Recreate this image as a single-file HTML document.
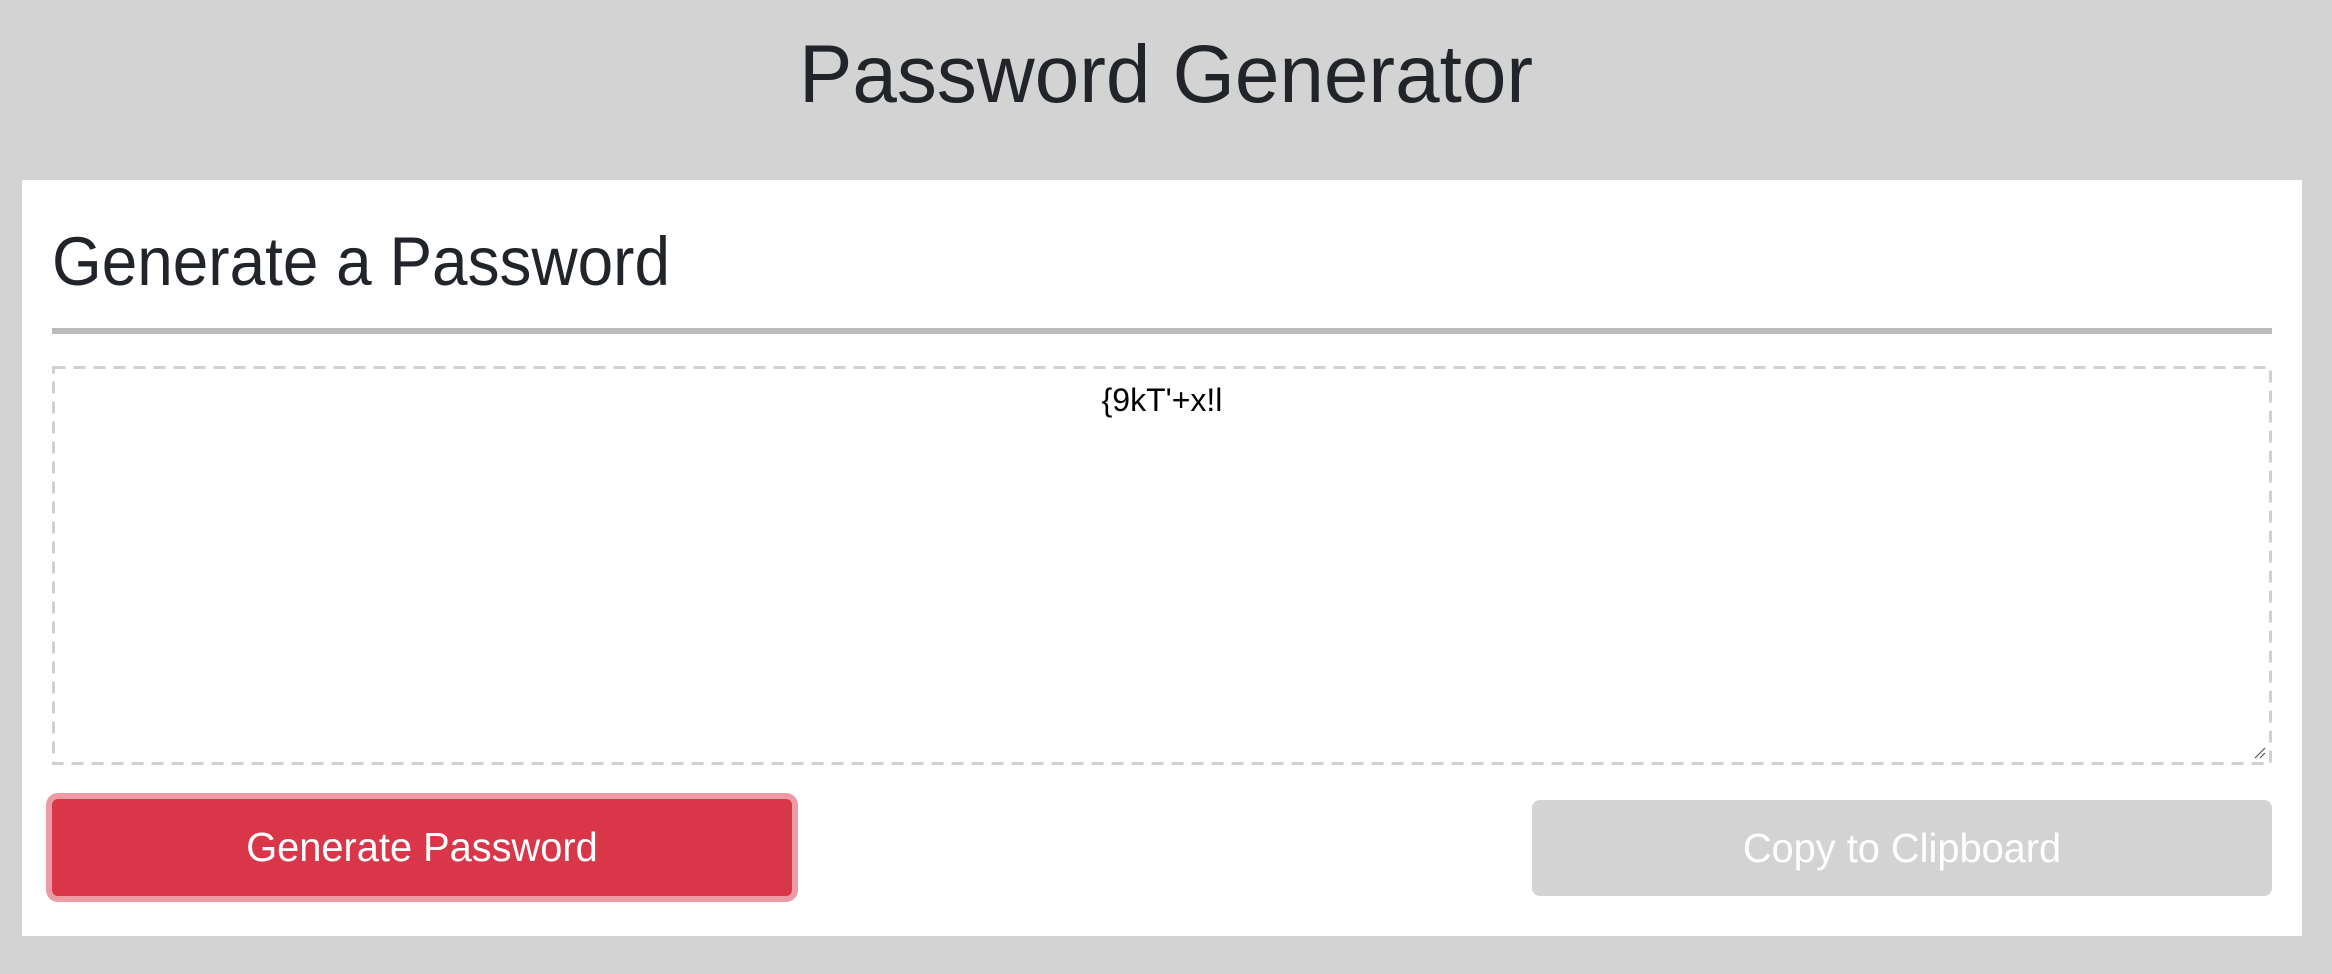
<!DOCTYPE html>
<html><head><meta charset="utf-8"><style>
html,body{margin:0;padding:0}
body{width:2332px;height:974px;background:#d3d3d3;position:relative;overflow:hidden;font-family:"Liberation Sans",Arial,sans-serif;color:#212529}
.a{position:absolute;margin:0;font-weight:normal;white-space:nowrap}
.t{left:0;width:2332px;top:20px;text-align:center;font-size:82px;line-height:110px;transform:scaleX(0.976)}
.card{left:22px;top:180px;width:2280px;height:756px;background:#fff}
.h{left:52px;top:217px;font-size:69px;line-height:90px;transform:scaleX(0.926);transform-origin:0 0}
.hr{left:52px;top:328px;width:2220px;height:6px;background:#bbb}
.tab{left:52px;top:366px}
.pw{left:52px;width:2220px;top:380px;text-align:center;font-size:32px;color:#000;line-height:40px}
.rs{left:2254px;top:747px}
.b1{left:46px;top:793px;width:752px;height:109px;box-sizing:border-box;border:6px solid #ec9aa3;border-radius:12px;background:#d93749}
.b2{left:1532px;top:800px;width:740px;height:96px;border-radius:8px;background:#d3d3d3}
.bt{color:#fff;font-size:41px;text-align:center;line-height:96px;transform:scaleX(0.97)}
</style></head><body>
<h1 class="a t">Password Generator</h1>
<div class="a card"></div>
<h2 class="a h">Generate a Password</h2>
<div class="a hr"></div>
<svg class="a tab" width="2220" height="399"><rect x="1.5" y="1.5" width="2217" height="396" fill="none" stroke="#d0d0d0" stroke-width="3" stroke-dasharray="12 8"/></svg>
<div class="a pw">{9kT'+x!l</div>
<svg class="a rs" width="12" height="12" viewBox="0 0 12 12"><path d="M1 11L11 1M6 11L11 6" stroke="#555" stroke-width="1.2"/></svg>
<div class="a b1"><div class="bt" style="line-height:97px">Generate Password</div></div>
<div class="a b2"><div class="bt">Copy to Clipboard</div></div>
</body></html>
